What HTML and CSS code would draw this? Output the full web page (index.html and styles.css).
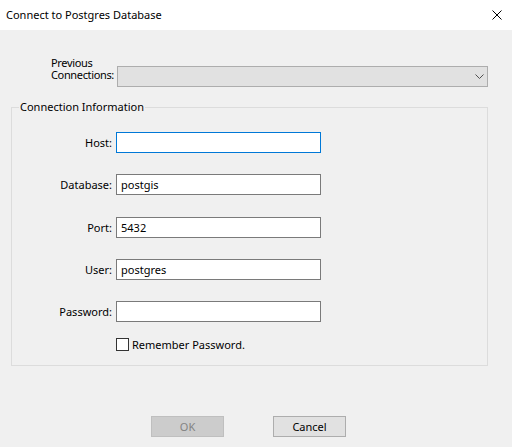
FILE: index.html
```html
<!DOCTYPE html>
<html>
<head>
<meta charset="utf-8">
<link rel="stylesheet" href="styles.css">
</head>
<body>
<div class="window">
  <div class="titlebar">
    <span class="title">Connect to Postgres Database</span>
    <svg class="close" width="10" height="10" viewBox="0 0 10 10"><path d="M0.5 0.5L9.5 9.5M9.5 0.5L0.5 9.5" stroke="#000" stroke-width="1" fill="none"/></svg>
  </div>
  <div class="content">
    <div class="prev-row">
      <div class="prev-label"><div class="pl-line">Previous</div><div class="pl-line">Connections:</div></div>
      <div class="combo">
        <svg class="chev" width="9" height="5" viewBox="0 0 9 5"><path d="M0.5 0.5L4.5 4.5L8.5 0.5" stroke="#505050" stroke-width="1" fill="none"/></svg>
      </div>
    </div>
    <fieldset class="group">
      <legend class="legend">Connection Information</legend>
      <div class="form">
        <label class="lbl">Host:</label><div class="input focus"></div>
        <label class="lbl">Database:</label><div class="input">postgis</div>
        <label class="lbl">Port:</label><div class="input">5432</div>
        <label class="lbl">User:</label><div class="input">postgres</div>
        <label class="lbl">Password:</label><div class="input"></div>
        <span></span><div class="check-row"><span class="checkbox"></span><span class="check-label">Remember Password.</span></div>
      </div>
    </fieldset>
    <div class="buttons">
      <div class="btn disabled">OK</div>
      <div class="btn">Cancel</div>
    </div>
  </div>
</div>
</body>
</html>
```

FILE: styles.css
```css
html, body {
  margin: 0;
  padding: 0;
}
body {
  width: 512px;
  height: 447px;
  background: #f0f0f0;
  font-family: "Noto Sans", "Open Sans", sans-serif;
  font-size: 11px;
  color: #000;
  overflow: hidden;
}
.window {
  width: 512px;
  height: 447px;
  background: #f0f0f0;
}
.titlebar {
  height: 30px;
  background: #fff;
  display: flex;
  align-items: center;
  justify-content: space-between;
  padding: 0 10px 0 6px;
  box-sizing: border-box;
}
.title {
  line-height: 16px;
}
.close {
  display: block;
  margin-top: 0;
}
.content {
  padding-top: 27px;
}
.prev-row {
  display: flex;
  align-items: flex-end;
  margin-left: 51px;
  column-gap: 4px;
}
.prev-label {
  width: 62px;
  padding-bottom: 6px;
  white-space: nowrap;
  letter-spacing: -0.35px;
}
.pl-line {
  line-height: 12px;
  height: 12px;
}
.combo {
  width: 371px;
  height: 21px;
  box-sizing: border-box;
  background: #e1e1e1;
  border: 1px solid #adadad;
  display: flex;
  align-items: center;
  justify-content: flex-end;
  padding-right: 3px;
}
.chev {
  display: block;
  margin-top: 0;
}
.group {
  margin: 12px 0 0 11px;
  width: 477px;
  height: 267px;
  box-sizing: border-box;
  border: 1px solid #dcdcdc;
  padding: 17px 0 0 0;
}
.legend {
  padding: 0 1px;
  margin-left: 7px;
  line-height: 16px;
}
.form {
  display: grid;
  grid-template-columns: 100px 205px;
  column-gap: 4px;
  row-gap: 21.25px;
  align-items: center;
}
.lbl {
  text-align: right;
  line-height: 16px;
  padding-top: 1px;
}
.input {
  height: 21px;
  box-sizing: border-box;
  border: 1px solid #7a7a7a;
  background: #fff;
  padding-left: 4px;
  line-height: 19px;
}
.input.focus {
  border-color: #0078d7;
}
.check-row {
  display: flex;
  align-items: center;
  column-gap: 3px;
  margin-top: -5px;
}
.checkbox {
  width: 13px;
  height: 13px;
  box-sizing: border-box;
  border: 1px solid #333;
  background: #fff;
}
.check-label {
  line-height: 13px;
}
.buttons {
  display: flex;
  margin: 50px 0 0 151px;
  column-gap: 49px;
}
.btn {
  width: 73px;
  height: 21px;
  box-sizing: border-box;
  background: #e1e1e1;
  border: 1px solid #adadad;
  text-align: center;
  line-height: 19px;
}
.btn.disabled {
  background: #cccccc;
  border-color: #bfbfbf;
  color: #838383;
}
```
